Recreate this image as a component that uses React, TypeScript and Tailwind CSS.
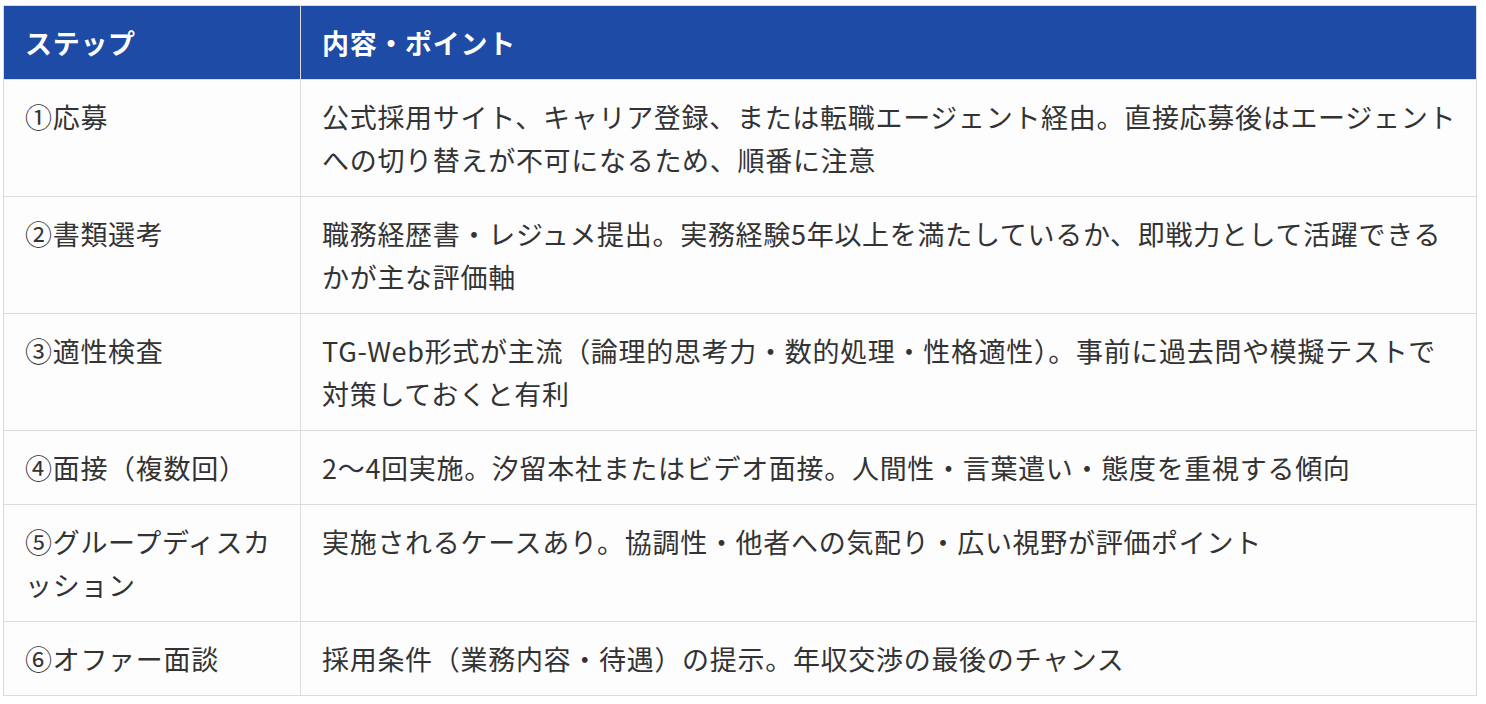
const rows: [string, string][] = [
  ["①応募", "公式採用サイト、キャリア登録、または転職エージェント経由。直接応募後はエージェントへの切り替えが不可になるため、順番に注意"],
  ["②書類選考", "職務経歴書・レジュメ提出。実務経験5年以上を満たしているか、即戦力として活躍できるかが主な評価軸"],
  ["③適性検査", "TG-Web形式が主流（論理的思考力・数的処理・性格適性）。事前に過去問や模擬テストで対策しておくと有利"],
  ["④面接（複数回）", "2〜4回実施。汐留本社またはビデオ面接。人間性・言葉遣い・態度を重視する傾向"],
  ["⑤グループディスカッション", "実施されるケースあり。協調性・他者への気配り・広い視野が評価ポイント"],
  ["⑥オファー面談", "採用条件（業務内容・待遇）の提示。年収交渉の最後のチャンス"],
];

export default function App() {
  return (
    <div className="bg-white pt-[5px] pl-[3px] w-[1486px] h-[704px] font-['Noto_Sans_CJK_JP','Noto_Sans',sans-serif]">
      <table className="w-[1474px] border-collapse table-fixed text-[27px] leading-[43px] tracking-[0.7px] text-[#333333]">
        <colgroup>
          <col className="w-[297px]" />
          <col />
        </colgroup>
        <thead>
          <tr className="bg-[#1e4ba6] text-white">
            <th className="border border-[#dcdcdc] pl-[21px] pr-[17px] py-[15px] text-left font-bold">ステップ</th>
            <th className="border border-[#dcdcdc] border-l-[#e8ecf5] pl-[21px] pr-[17px] py-[15px] text-left font-bold">内容・ポイント</th>
          </tr>
        </thead>
        <tbody>
          {rows.map(([step, text]) => (
            <tr key={step} className="bg-[#fdfdfe]">
              <td className="border border-[#dcdcdc] pl-[21px] pr-[17px] py-[15px] align-top">{step}</td>
              <td className="border border-[#dcdcdc] pl-[21px] pr-[17px] py-[15px] align-top">{text}</td>
            </tr>
          ))}
        </tbody>
      </table>
    </div>
  );
}
